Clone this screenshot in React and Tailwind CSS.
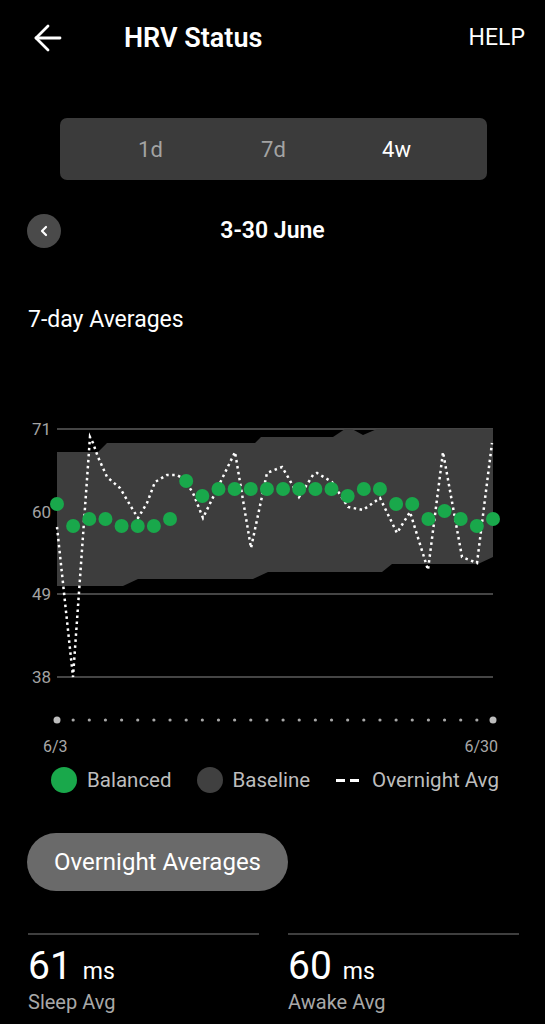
import React from "react";

// 7-day average dots (page coords, y in px)
const balanced = [504, 526, 519, 519, 526, 526, 526, 519, 481, 496, 489, 489, 489, 489, 489, 489, 489, 489, 496, 489, 489, 504, 504, 519, 511, 519, 526, 519];

const overnight = [
  [57, 527], [73, 677], [90, 437], [93, 443], [98, 457], [107, 477], [120, 488], [133, 510], [138, 518],
  [147, 503], [155, 482], [167, 475], [177, 475], [184, 479], [193, 493], [203, 518], [235, 452],
  [251, 548], [267, 473], [282, 467], [288, 477], [299, 497], [313, 475], [317, 473], [332, 482],
  [348, 507], [363, 510], [380, 498], [397, 533], [410, 512], [428, 570], [443, 452], [462, 557],
  [477, 563], [492, 443],
];

const band =
  "57,452 98,452 107,443 255,443 261,437 333,437 345,429 352,429 363,435 377,429 493,429 " +
  "493,557 478,564 392,564 382,572 268,572 253,579 138,579 123,586 57,586";

const grid = [
  { label: "71", y: 429 },
  { label: "60", y: 511.5 },
  { label: "49", y: 594 },
  { label: "38", y: 677 },
];

const xAt = (i) => 57 + (436 / 27) * i;

const Chart = () => (
  <svg width="545" height="396" viewBox="0 334 545 396" className="block">
    {grid.map((g) => (
      <g key={g.label}>
        <line x1="57" x2="493" y1={g.y} y2={g.y} stroke="#5c5c5c" strokeWidth="1.5" />
        <text x="51" y={g.y + 6} textAnchor="end" fontSize="17" fill="#a3a3a3" fontFamily="Roboto, sans-serif">
          {g.label}
        </text>
      </g>
    ))}
    <polygon points={band} fill="#3d3d3d" />
    <polyline
      points={overnight.map((p) => p.join(",")).join(" ")}
      fill="none"
      stroke="#ffffff"
      strokeWidth="2.5"
      strokeDasharray="2.5 3.5"
    />
    {balanced.map((y, i) => (
      <circle key={i} cx={xAt(i)} cy={y} r="7" fill="#19a84b" />
    ))}
    {balanced.map((_, i) => {
      const end = i === 0 || i === 27;
      return <circle key={"d" + i} cx={xAt(i)} cy="720" r={end ? 3.5 : 1.6} fill={end ? "#bdbdbd" : "#a8a8a8"} />;
    })}
  </svg>
);

const Stat = ({ value, label }) => (
  <div className="border-t-[2px] border-[#3f3f3f]">
    <div className="mt-[12px] flex items-baseline">
      <span className="text-[39px] leading-[38px] text-white">{value}</span>
      <span className="ml-[11px] text-[23px] leading-[38px] text-white">ms</span>
    </div>
    <div className="mt-[-1px] text-[20px] leading-[24px] text-[#a8a8a8]">{label}</div>
  </div>
);

export default function App() {
  return (
    <div className="w-[545px] min-h-[1024px] overflow-hidden bg-black text-white font-[Roboto,sans-serif]">
      {/* Header */}
      <div className="flex h-[76px] items-center pl-[34px] pr-[20px]">
        <svg width="28" height="28" viewBox="0 0 28 28" fill="none" stroke="white" strokeWidth="2.8" strokeLinecap="round" strokeLinejoin="round">
          <path d="M26 14H2" />
          <path d="M14 2L2 14l12 12" />
        </svg>
        <h1 className="ml-[62px] text-[27px] font-semibold">HRV Status</h1>
        <span className="ml-auto text-[23px]">HELP</span>
      </div>

      {/* Range switch */}
      <div className="mx-[60px] mt-[42px] flex h-[62px] w-[427px] items-center justify-center rounded-[7px] bg-[#3b3b3b] text-[22px]">
        <span className="w-[123px] text-center text-[#a3a3a3]">1d</span>
        <span className="w-[123px] text-center text-[#a3a3a3]">7d</span>
        <span className="w-[123px] text-center text-white">4w</span>
      </div>

      {/* Date row */}
      <div className="mt-[34px] grid h-[34px] grid-cols-[34px_1fr_34px] items-center px-[27px]">
        <div className="flex h-[34px] w-[34px] items-center justify-center rounded-full bg-[#4a4a4a]">
          <svg width="10" height="12" viewBox="0 0 10 12" fill="none" stroke="white" strokeWidth="2.2" strokeLinecap="round" strokeLinejoin="round">
            <path d="M7 2L3 6l4 4" />
          </svg>
        </div>
        <div className="text-center text-[23px] font-semibold">3-30 June</div>
        <div />
      </div>

      <div className="mt-[58px] pl-[28px] text-[23px] leading-[28px]">7-day Averages</div>

      <Chart />

      <div className="mt-[7px] flex justify-between pl-[43px] pr-[47px] text-[16px] leading-[20px] text-[#a8a8a8]">
        <span>6/3</span>
        <span>6/30</span>
      </div>

      {/* Legend */}
      <div className="mt-[10px] flex h-[26px] items-center pl-[51px] text-[20.5px] text-[#bdbdbd]">
        <span className="h-[26px] w-[26px] rounded-full bg-[#19a84b]" />
        <span className="ml-[10px]">Balanced</span>
        <span className="ml-[25px] h-[26px] w-[26px] rounded-full bg-[#404040]" />
        <span className="ml-[10px]">Baseline</span>
        <span className="ml-[26px] flex gap-[5px]">
          <span className="h-[3px] w-[9px] bg-white" />
          <span className="h-[3px] w-[9px] bg-white" />
        </span>
        <span className="ml-[13px]">Overnight Avg</span>
      </div>

      <button className="ml-[27px] mt-[40px] flex h-[58px] w-[261px] items-center justify-center rounded-full bg-[#6a6a6a] text-[24px] text-white">
        Overnight Averages
      </button>

      <div className="mt-[42px] grid grid-cols-2 gap-x-[29px] pl-[28px] pr-[26px]">
        <Stat value="61" label="Sleep Avg" />
        <Stat value="60" label="Awake Avg" />
      </div>
    </div>
  );
}
